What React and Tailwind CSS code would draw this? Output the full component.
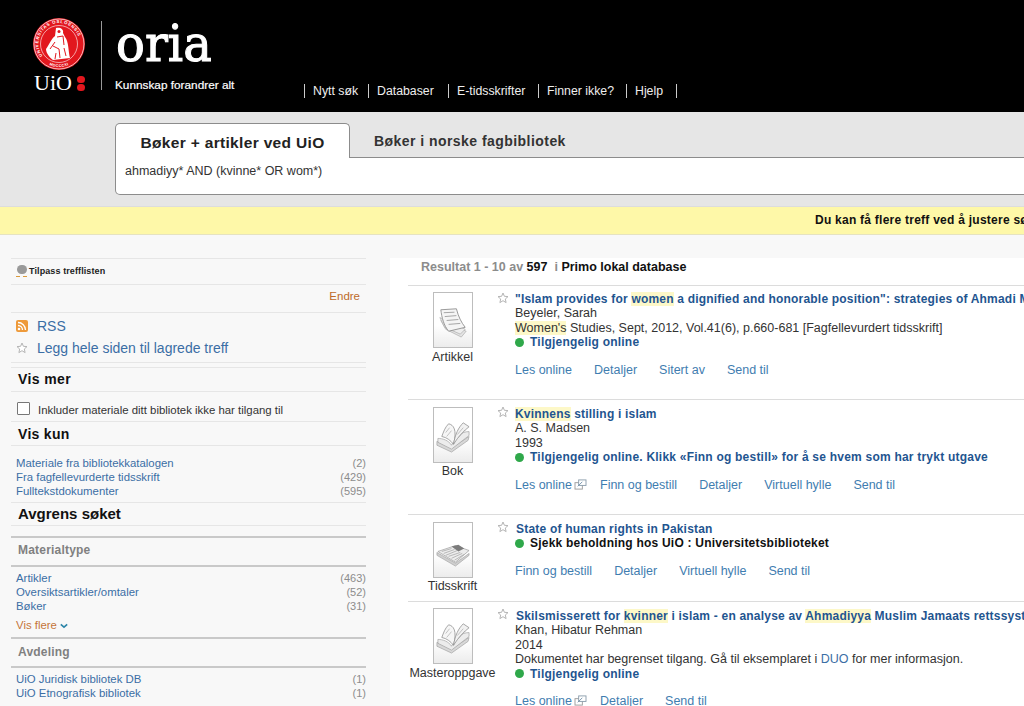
import React from "react";

const Mark = ({ children }) => <span className="bg-[#fdf8c8]">{children}</span>;

const Star = ({ className = "" }) => (
  <svg viewBox="0 0 12 12" className={`w-[12px] h-[12px] ${className}`}>
    <path d="M6 1 L7.4 4.3 L11 4.6 L8.3 7 L9.1 10.6 L6 8.7 L2.9 10.6 L3.7 7 L1 4.6 L4.6 4.3 Z" fill="#fff" stroke="#b5b5b5" strokeWidth="1" strokeLinejoin="round" />
  </svg>
);

const ExtLink = () => (
  <svg viewBox="0 0 14 12" className="w-[13px] h-[11px] inline-block ml-[2px] align-[-1px]">
    <rect x="1" y="4" width="8" height="7" fill="none" stroke="#9a9a9a" strokeWidth="1" />
    <rect x="5" y="1" width="8" height="6" fill="#fff" stroke="#8a9cab" strokeWidth="1" />
    <path d="M4 8 L9 3" stroke="#6f8ea8" strokeWidth="1" />
  </svg>
);

const ThumbArticle = () => (
  <svg viewBox="0 0 39 55" className="w-full h-full">
    <path d="M7 28 L26 36 L33 39 L28 45 L12 37 Z" fill="#e4e4e4" stroke="#aaa" strokeWidth="0.7" />
    <path d="M6 25 L26 34 L32 37 L27 42 L11 35 Z" fill="#eee" stroke="#aaa" strokeWidth="0.7" />
    <path d="M7 17 L23 16 C25 24 28 30 32 35 L15 39 C10 33 8 25 7 17 Z" fill="#f5f5f5" stroke="#8d8d8d" strokeWidth="0.9" />
    <path d="M10 20 L21 19.5 M11 24 L23 23 M13 28 L25 27 M15 32 L27 31" stroke="#9b9b9b" strokeWidth="0.9" />
  </svg>
);

const ThumbBook = () => (
  <svg viewBox="0 0 39 55" className="w-full h-full">
    <path d="M3 34 L18 41 L36 29 L35 33 L18 45 L3 38 Z" fill="#d8d8d8" stroke="#a0a0a0" strokeWidth="0.7" />
    <path d="M4 31 C9 31 15 33 18 38 C22 29 28 24 36 24 L36 28 L18 42 L4 35 Z" fill="#ececec" stroke="#a0a0a0" strokeWidth="0.7" />
    <path d="M8 29 C10 24 11 20 15 16 C20 17 24 22 20 37 C17 33 13 30 8 29 Z" fill="#f6f6f6" stroke="#8f8f8f" strokeWidth="0.8" />
    <path d="M20 37 C22 26 25 20 30 15 L36 19 C31 23 25 29 20 37 Z" fill="#f2f2f2" stroke="#8f8f8f" strokeWidth="0.8" />
    <path d="M12 25 L16 20 M13 29 L18 23 M24 27 L30 20 M25 30 L32 22" stroke="#aaa" strokeWidth="0.7" />
  </svg>
);

const ThumbJournal = () => (
  <svg viewBox="0 0 39 55" className="w-full h-full">
    <path d="M3 30 L22 41 L36 31 L36 33 L22 44 L3 33 Z" fill="#cfcfcf" stroke="#9a9a9a" strokeWidth="0.6" />
    <path d="M4 29 L22 23 L36 28 L22 40 Z" fill="#ededed" stroke="#9a9a9a" strokeWidth="0.7" />
    <path d="M18 24 L25 22 L31 26 L25 29 Z" fill="#7c7c7c" />
    <path d="M8 29 L18 26 M10 31 L21 27 M12 33 L24 28 M15 34 L27 30 M18 36 L29 31 M21 38 L31 32" stroke="#9d9d9d" strokeWidth="0.7" />
  </svg>
);

const Logo = () => (
  <svg viewBox="0 0 52 52" className="w-[52px] h-[52px]">
    <defs>
      <path id="sealTop" d="M9.5 38 A20.6 20.6 0 1 1 42.5 38" />
      <path id="sealBottom" d="M13 45 A23 23 0 0 0 39 45" />
    </defs>
    <circle cx="26" cy="26" r="26" fill="#e2171e" />
    <circle cx="26" cy="26" r="25" fill="none" stroke="#fff" strokeWidth="0.7" />
    <circle cx="26" cy="26" r="18.5" fill="none" stroke="#fff" strokeWidth="0.6" />
    <text fontSize="4.3" fontWeight="700" fill="#fff" fontFamily="'Liberation Sans',sans-serif" letterSpacing="0.75">
      <textPath href="#sealTop">UNIVERSITAS OSLOENSIS</textPath>
    </text>
    <text fontSize="3.8" fontWeight="700" fill="#fff" fontFamily="'Liberation Sans',sans-serif" letterSpacing="0.3">
      <textPath href="#sealBottom" startOffset="14%">MDCCCXI</textPath>
    </text>
    <path d="M23 10 C27 9 31 11 30 15 L32 19 C36 24 35 33 37 40 L20 42 C17 40 13 35 13 31 C16 27 18 21 22 18 Z" fill="#fff" />
    <path d="M24 19 L30 18 L31 27 M20 28 L26 31 L27 40 M31 30 L33 38 M22 24 L17 31 M23 35 L22 41" stroke="#e2171e" strokeWidth="1" fill="none" />
    <circle cx="26" cy="13.5" r="1.5" fill="#e2171e" />
  </svg>
);

const Section = ({ children, className = "" }) => (
  <div className={`border-b border-[#e6e6e6] ${className}`}>{children}</div>
);

const FacetLine = ({ label, count }) => (
  <div className="flex justify-between pl-[5px] h-[14px] leading-[14px]">
    <span className="text-[11.4px] text-[#3b6ea5]">{label}</span>
    <span className="text-[11px] text-[#8c8c8c]">({count})</span>
  </div>
);

const Sidebar = () => (
  <aside className="w-[390px] shrink-0 bg-[#f8f8f8] pl-[11px] pr-[24px] pt-[23px]">
    <Section className="border-t h-[27px] flex items-center text-[9px] font-bold text-[#222] tracking-[0.1px]">
      <span className="relative w-[12px] h-[12px] ml-[5px] mr-[1px] -mt-[2px] shrink-0">
        <span className="absolute left-[1px] top-0 w-[10px] h-[9px] rounded-full bg-[#9a9a9a]" />
        <span className="absolute left-0 bottom-0 w-[4px] h-[1px] bg-[#d99a3c]" />
        <span className="absolute left-[7px] bottom-0 w-[4px] h-[1px] bg-[#d99a3c]" />
      </span>
      <span>Tilpass trefflisten</span>
    </Section>
    <Section className="h-[28px] flex items-center justify-end pr-[6px] pb-[3px] text-[11.5px] text-[#bd6b2a]">Endre</Section>
    <Section className="h-[50px] pl-[5px] pt-[2px] text-[14px] text-[#3b6ea5]">
      <div className="flex items-center h-[22px]">
        <svg viewBox="0 0 12 12" className="w-[12px] h-[12px] mr-[9px]">
          <rect width="12" height="12" rx="2" fill="#ee9a3a" />
          <circle cx="3" cy="9" r="1.3" fill="#fff" />
          <path d="M2 5.5 A4.5 4.5 0 0 1 6.5 10 M2 2.5 A7.5 7.5 0 0 1 9.5 10" fill="none" stroke="#fff" strokeWidth="1.3" />
        </svg>
        RSS
      </div>
      <div className="flex items-center h-[22px]">
        <Star className="mr-[9px]" />
        Legg hele siden til lagrede treff
      </div>
    </Section>
    <Section className="mt-[4px] border-t h-[25px] flex items-center pl-[7px] text-[14px] font-bold text-[#111] tracking-[0.4px]">Vis mer</Section>
    <Section className="h-[30px] flex items-center pl-[6px] pt-[9px] text-[11.4px] text-[#333]">
      <span className="w-[13px] h-[13px] -mt-[5px] border border-[#777] rounded-[1px] bg-white mr-[8px]" />
      Inkluder materiale ditt bibliotek ikke har tilgang til
    </Section>
    <Section className="h-[24px] flex items-center pl-[7px] pt-[1px] text-[14px] font-bold text-[#111] tracking-[0.3px]">Vis kun</Section>
    <Section className="h-[57px] pt-[10px]">
      <FacetLine label="Materiale fra bibliotekkatalogen" count="2" />
      <FacetLine label="Fra fagfellevurderte tidsskrift" count="429" />
      <FacetLine label="Fulltekstdokumenter" count="595" />
    </Section>
    <Section className="h-[23px] flex items-center pl-[7px] text-[15px] font-bold text-[#111]">Avgrens søket</Section>
    <div className="mt-[10px] border-t-2 border-b-2 border-[#c9c9c9] h-[31px] flex items-center pl-[7px] pb-[4px] text-[12px] font-bold text-[#808080] tracking-[0.2px]">Materialtype</div>
    <div className="h-[70px] pt-[4px]">
      <FacetLine label="Artikler" count="463" />
      <FacetLine label="Oversiktsartikler/omtaler" count="52" />
      <FacetLine label="Bøker" count="31" />
      <div className="pl-[5px] mt-[5px] text-[11.4px] leading-[14px] text-[#c5753a] flex items-center gap-[3px]">
        Vis flere
        <svg viewBox="0 0 10 7" className="w-[8px] h-[6px] mt-[2px]">
          <path d="M1 1.5 L5 5 L9 1.5" fill="none" stroke="#2d86a8" strokeWidth="2" />
        </svg>
      </div>
    </div>
    <div className="border-t-2 border-b-2 border-[#c9c9c9] h-[31px] flex items-center pl-[7px] pb-[2px] text-[12px] font-bold text-[#808080] tracking-[0.2px]">Avdeling</div>
    <div className="pt-[4px]">
      <FacetLine label="UiO Juridisk bibliotek DB" count="1" />
      <FacetLine label="UiO Etnografisk bibliotek" count="1" />
    </div>
  </aside>
);

const Avail = ({ children, dark }) => (
  <div className={`flex items-center font-bold text-[12px] tracking-[0.22px] ${dark ? "text-[#111]" : "text-[#1f5590]"}`}>
    <span className="w-[9px] h-[9px] rounded-full bg-[#2fa84a] mr-[6px]" />
    {children}
  </div>
);

const Links = ({ items }) => (
  <div className="mt-[13px] flex gap-[22px] text-[#3f7db0]">
    {items.map((it) => (
      <span key={it.label} className={it.ext ? "-mr-[9px]" : ""}>
        {it.label}
        {it.ext && <ExtLink />}
      </span>
    ))}
  </div>
);

const Result = ({ h, thumb, type, children, textPt = "pt-[6.5px]", low }) => (
  <div className={`flex border-t border-[#dcdcdc] ${h}`}>
    <div className={`w-[89px] shrink-0 flex flex-col items-center ${low ? "pt-[7px]" : "pt-[6px]"}`}>
      <div className="w-[40px] h-[56px] border border-[#bdbdbd] bg-gradient-to-b from-white from-60% to-[#ececec]">{thumb}</div>
      <div className={low ? "mt-[1px]" : "mt-[2px]"}>{type}</div>
    </div>
    <div className="w-[18px] shrink-0 pt-[6px]"><Star /></div>
    <div className={textPt}>{children}</div>
  </div>
);

const Title = ({ children, nudge }) => (
  <div className={`font-bold text-[12px] text-[#1f5590] tracking-[0.2px] ${nudge ? "pl-[1px]" : ""}`}>{children}</div>
);

const Results = () => (
  <main className="flex-1 min-w-0 bg-white text-[12.5px] leading-[14.5px] text-[#333] whitespace-nowrap">
    <div className="h-[23px] bg-[#f8f8f8]" />
    <div className="h-[27px] pl-[31px] pt-[2px] font-bold text-[#8c8c8c]">
      Resultat 1 - 10 av <span className="text-[#111]">597</span>&nbsp; i <span className="text-[#111]">Primo lokal database</span>
    </div>
    <div className="ml-[18px]">
      <Result h="h-[114px]" thumb={<ThumbArticle />} type="Artikkel" textPt="pt-[5.5px]">
        <Title>"Islam provides for <Mark>women</Mark> a dignified and honorable position": strategies of Ahmadi Muslim women</Title>
        <div>Beyeler, Sarah</div>
        <div><Mark>Women's</Mark> Studies, Sept, 2012, Vol.41(6), p.660-681 [Fagfellevurdert tidsskrift]</div>
        <Avail>Tilgjengelig online</Avail>
        <Links items={[{ label: "Les online" }, { label: "Detaljer" }, { label: "Sitert av" }, { label: "Send til" }]} />
      </Result>
      <Result h="h-[115px]" thumb={<ThumbBook />} type="Bok" low>
        <Title><Mark>Kvinnens</Mark> stilling i islam</Title>
        <div>A. S. Madsen</div>
        <div>1993</div>
        <Avail>Tilgjengelig online. Klikk «Finn og bestill» for å se hvem som har trykt utgave</Avail>
        <Links items={[{ label: "Les online", ext: true }, { label: "Finn og bestill" }, { label: "Detaljer" }, { label: "Virtuell hylle" }, { label: "Send til" }]} />
      </Result>
      <Result h="h-[87px]" thumb={<ThumbJournal />} type="Tidsskrift" low>
        <Title nudge>State of human rights in Pakistan</Title>
        <Avail dark>Sjekk beholdning hos UiO : Universitetsbiblioteket</Avail>
        <Links items={[{ label: "Finn og bestill" }, { label: "Detaljer" }, { label: "Virtuell hylle" }, { label: "Send til" }]} />
      </Result>
      <Result h="h-[110px]" thumb={<ThumbBook />} type="Masteroppgave">
        <Title nudge>Skilsmisserett for <Mark>kvinner</Mark> i islam - en analyse av <Mark>Ahmadiyya</Mark> Muslim Jamaats rettssystem</Title>
        <div>Khan, Hibatur Rehman</div>
        <div>2014</div>
        <div>Dokumentet har begrenset tilgang. Gå til eksemplaret i <span className="text-[#3b6ea5]">DUO</span> for mer informasjon.</div>
        <Avail>Tilgjengelig online</Avail>
        <Links items={[{ label: "Les online", ext: true }, { label: "Detaljer" }, { label: "Send til" }]} />
      </Result>
    </div>
  </main>
);

const navItems = [
  { label: "Nytt søk", w: "w-[64px]" },
  { label: "Databaser", w: "w-[80px]" },
  { label: "E-tidsskrifter", w: "w-[90px]" },
  { label: "Finner ikke?", w: "w-[88px]" },
  { label: "Hjelp", w: "w-[50px]" },
];

export default function App() {
  return (
    <div className="w-[1024px] h-[706px] overflow-hidden bg-white font-['Liberation_Sans',Arial,sans-serif]">
      <header className="h-[112px] bg-black flex text-white">
        <div className="w-[68px] ml-[33px] pt-[18px] shrink-0">
          <Logo />
          <div className="flex items-center mt-[2px] ml-[1px]">
            <span className="text-[22px] leading-[22px] font-['Liberation_Serif',serif]">UiO</span>
            <span className="ml-[5px] flex flex-col gap-[1px] mt-[1px]">
              <span className="w-[8px] h-[7px] rounded-full bg-[#e2171e]" />
              <span className="w-[8px] h-[7px] rounded-full bg-[#e2171e]" />
            </span>
          </div>
        </div>
        <div className="w-px h-[69px] mt-[21px] bg-[#999] shrink-0" />
        <div className="w-[188px] ml-[14px] shrink-0">
          <div className="mt-[17px] h-[54px] text-[48px] leading-[54px] font-['DejaVu_Serif',serif] [-webkit-text-stroke:1px_white] origin-[0_42px] scale-y-[1.06]">oria</div>
          <div className="mt-[7px] -ml-px text-[11.8px] leading-[14px] [-webkit-text-stroke:0.2px_white]">Kunnskap forandrer alt</div>
        </div>
        <nav className="self-end pb-[14px] flex text-[12.3px] leading-[14px] text-[#eee]">
          {navItems.map((n) => (
            <span key={n.label} className={`border-l border-[#ccc] pl-[8px] ${n.w}`}>{n.label}</span>
          ))}
          <span className="border-l border-[#ccc]" />
        </nav>
      </header>

      <section className="h-[95px] bg-[#e6e6e6] pt-[11px] pl-[115px] border-b border-[#ddd]">
        <div className="flex h-[35px] w-[1000px]">
          <div className="w-[235px] border border-b-0 border-[#8c8c8c] rounded-t-[5px] bg-white flex items-center justify-center pt-[4px] text-[15.5px] font-bold text-[#222] tracking-[0.33px]">Bøker + artikler ved UiO</div>
          <div className="flex-1 border-b border-[#8c8c8c] pl-[24px] pt-[8px] text-[14px] font-bold text-[#333] tracking-[0.45px]">Bøker i norske fagbibliotek</div>
        </div>
        <div className="h-[37px] w-[1000px] bg-white border border-t-0 border-[#8c8c8c] rounded-b-[5px] pl-[9px] pt-[6px] text-[12.5px] leading-[14px] text-[#333]">ahmadiyy* AND (kvinne* OR wom*)</div>
      </section>

      <div className="h-[28px] bg-[#fef8a8] border-b border-[#e6e3c0] pl-[815px] text-[12px] leading-[26px] font-bold text-[#111] tracking-[0.25px] whitespace-nowrap">Du kan få flere treff ved å justere søket</div>

      <div className="flex h-[471px]">
        <Sidebar />
        <Results />
      </div>
    </div>
  );
}
